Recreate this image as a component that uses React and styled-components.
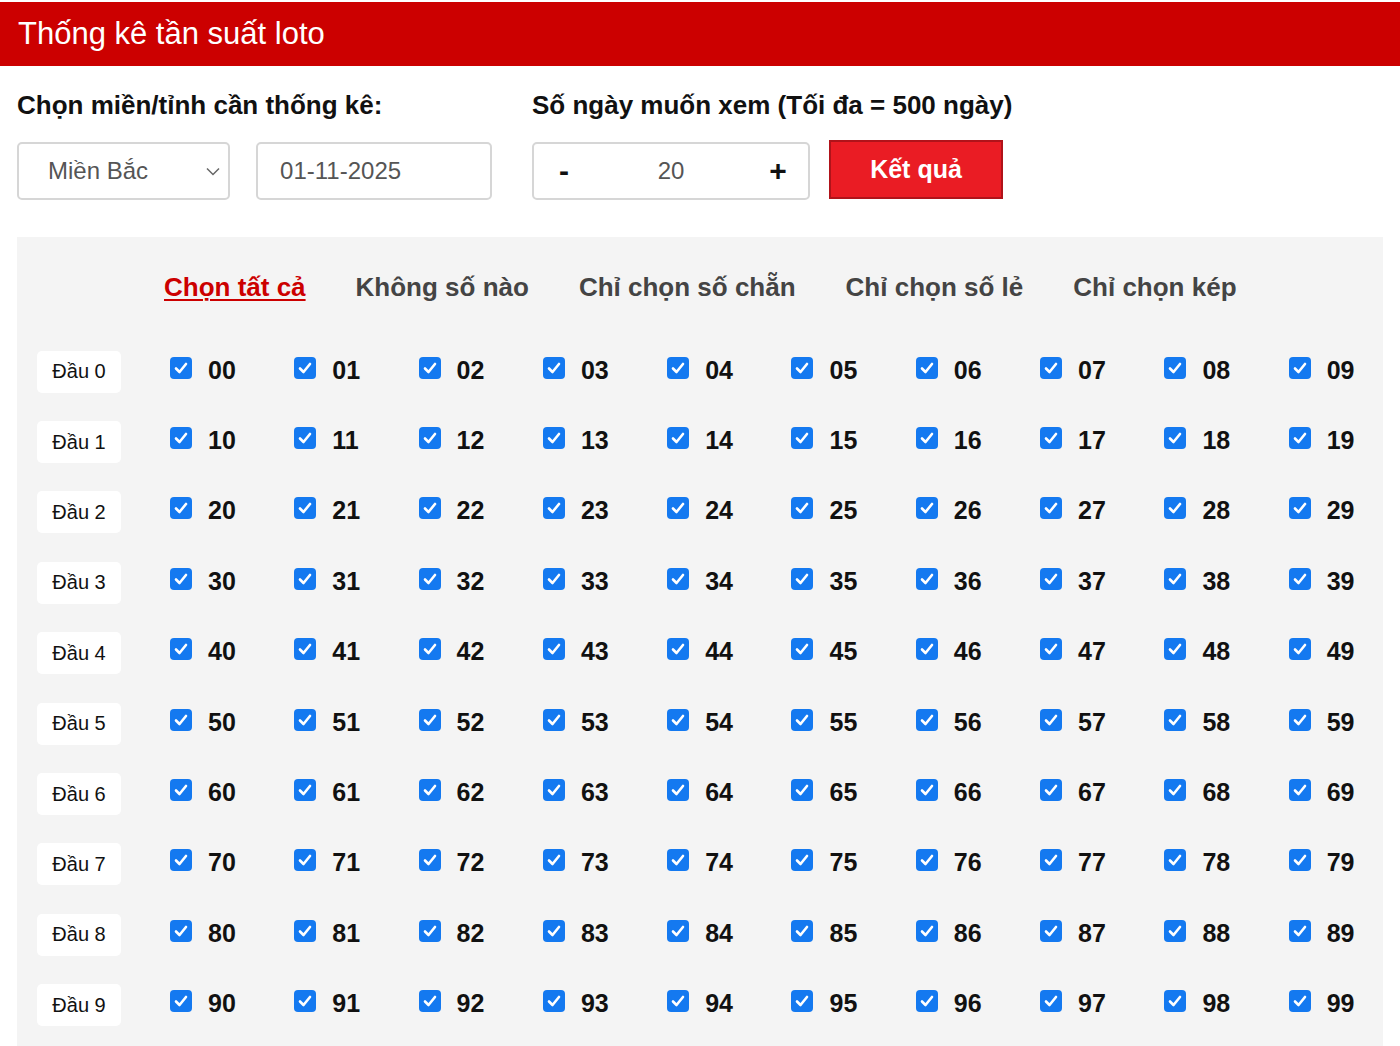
import React, { useState } from "react"
import styled, { createGlobalStyle } from "styled-components"

const GlobalStyle = createGlobalStyle`
  body {
    margin: 0;
    background: #fff;
    font-family: "Liberation Sans", Arial, sans-serif;
    color: #111;
  }
`

const Header = styled.div`
  margin-top: 2px;
  height: 64px;
  background-color: #cc0000;
  color: #fff;
  font-size: 31px;
  display: flex;
  align-items: center;
  padding-left: 18px;
`

const Form = styled.div`
  display: flex;
  gap: 40px;
  padding: 24px 17px 0;
`

const Group = styled.div`
  width: ${({ w }) => w}px;
  display: flex;
  flex-direction: column;
  gap: 22px;
`

const Label = styled.div`
  font-size: 26px;
  font-weight: 700;
  line-height: 30px;
  color: #111;
  white-space: nowrap;
`

const Fields = styled.div`
  display: flex;
  align-items: center;
  gap: ${({ gap }) => gap}px;
`

const Field = styled.div`
  box-sizing: border-box;
  width: ${({ w }) => w}px;
  height: 58px;
  border: 2px solid #d6d6d6;
  border-radius: 5px;
  background: #fff;
  display: flex;
  align-items: center;
  padding: 0 ${({ px }) => px || 22}px;
  font-size: 24px;
  color: #555;
`

const Chevron = styled.svg`
  margin-left: auto;
  margin-right: -21px;
`

const StepBtn = styled.span`
  font-size: 30px;
  font-weight: 700;
  color: #111;
  width: 30px;
  text-align: center;
  cursor: pointer;
`

const StepValue = styled.span`
  flex: 1;
  text-align: center;
`

const Submit = styled.button`
  box-sizing: border-box;
  width: 174px;
  height: 59px;
  margin-top: -4px;
  background: #ea1c24;
  border: 2px solid #b0131a;
  color: #fff;
  font-family: inherit;
  font-size: 25px;
  font-weight: 700;
  cursor: pointer;
`

const Panel = styled.div`
  margin: 37px 17px 0;
  background: #f4f4f4;
  padding: 35px 0 20px 20px;
`

const Filters = styled.div`
  display: flex;
  gap: 50px;
  padding-left: 127px;
  margin-bottom: 33px;
`

const Filter = styled.a`
  font-size: 26px;
  font-weight: 700;
  line-height: 30px;
  color: ${({ active }) => (active ? "#cc0000" : "#444")};
  text-decoration: ${({ active }) => (active ? "underline" : "none")};
  text-underline-offset: 3px;
  text-decoration-thickness: 2px;
  cursor: pointer;
`

const Grid = styled.div`
  display: grid;
  grid-template-columns: 133px repeat(10, 124.3px);
  grid-auto-rows: 70.4px;
  align-items: center;
`

const Head = styled.div`
  box-sizing: border-box;
  width: 84px;
  height: 42px;
  margin-top: 3px;
  background: #fff;
  border-radius: 5px;
  display: flex;
  align-items: center;
  justify-content: center;
  font-size: 20px;
  color: #111;
`

const Cell = styled.label`
  display: flex;
  align-items: center;
  gap: 16px;
  cursor: pointer;
`

const Box = styled.span`
  width: 22px;
  height: 22px;
  border-radius: 4px;
  background: ${({ on }) => (on ? "#1479f0" : "#fff")};
  border: ${({ on }) => (on ? "none" : "1px solid #888")};
  display: flex;
  align-items: center;
  justify-content: center;
  margin-top: -5px;
`

const Num = styled.span`
  font-size: 25px;
  font-weight: 700;
  color: #111;
`

const filters = ["Chọn tất cả", "Không số nào", "Chỉ chọn số chẵn", "Chỉ chọn số lẻ", "Chỉ chọn kép"]

export default function App() {
  const [days, setDays] = useState(20)
  const [checked, setChecked] = useState(() => Array(100).fill(true))

  const toggle = (n) => {
    setChecked((prev) => prev.map((v, i) => (i === n ? !v : v)))
  }

  return (
    <>
      <GlobalStyle />
      <Header>Thống kê tần suất loto</Header>
      <Form>
        <Group w={475}>
          <Label>Chọn miền/tỉnh cần thống kê:</Label>
          <Fields gap={26}>
            <Field w={214} px={29}>
              Miền Bắc
              <Chevron width="14" height="9" viewBox="0 0 14 9">
                <path d="M1 1.5 L7 7.5 L13 1.5" fill="none" stroke="#666" strokeWidth="1.5" />
              </Chevron>
            </Field>
            <Field w={237}>01-11-2025</Field>
          </Fields>
        </Group>
        <Group w={500}>
          <Label>Số ngày muốn xem (Tối đa = 500 ngày)</Label>
          <Fields gap={19}>
            <Field w={278} px={15}>
              <StepBtn onClick={() => setDays((d) => Math.max(1, d - 1))}>-</StepBtn>
              <StepValue>{days}</StepValue>
              <StepBtn onClick={() => setDays((d) => Math.min(500, d + 1))}>+</StepBtn>
            </Field>
            <Submit>Kết quả</Submit>
          </Fields>
        </Group>
      </Form>
      <Panel>
        <Filters>
          {filters.map((f, i) => (
            <Filter key={f} active={i === 0}>{f}</Filter>
          ))}
        </Filters>
        <Grid>
          {Array.from({ length: 10 }).map((_, row) => (
            <React.Fragment key={row}>
              <Head>Đầu {row}</Head>
              {Array.from({ length: 10 }).map((_, col) => {
                const n = row * 10 + col
                return (
                  <Cell key={n} onClick={() => toggle(n)}>
                    <Box on={checked[n]}>
                      {checked[n] && (
                        <svg width="14" height="12" viewBox="0 0 14 12">
                          <path d="M2 6.5 L5.5 10 L12 2" fill="none" stroke="#fff" strokeWidth="2.6" strokeLinecap="round" strokeLinejoin="round" />
                        </svg>
                      )}
                    </Box>
                    <Num>{String(n).padStart(2, "0")}</Num>
                  </Cell>
                )
              })}
            </React.Fragment>
          ))}
        </Grid>
      </Panel>
    </>
  )
}
